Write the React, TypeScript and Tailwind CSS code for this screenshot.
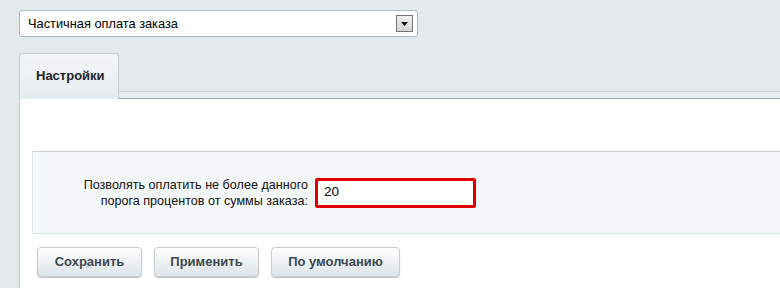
import React from 'react';

const buttons = [
  { label: 'Сохранить', w: 'w-[105px]' },
  { label: 'Применить', w: 'w-[105px]' },
  { label: 'По умолчанию', w: 'w-[129px]' },
];

const App: React.FC = () => {
  return (
    <div className="w-[780px] h-[288px] overflow-hidden bg-[#e4eaec] font-['Arial','Liberation_Sans',sans-serif] text-black">
      {/* select */}
      <div className="pt-[10px] pl-[19px]">
        <div className="w-[399px] h-[27px] bg-white border border-[#b2b9bc] rounded-[3px] flex items-center justify-between pl-[8px] pr-[4px]">
          <span className="text-[12.8px]">Частичная оплата заказа</span>
          <div className="w-[17px] h-[17px] border border-[#6f7477] bg-gradient-to-b from-[#f2f2f2] to-[#d4d4d4] flex items-center justify-center">
            <svg width="7" height="4" viewBox="0 0 7 4">
              <path d="M0 0h7L3.5 4z" fill="#111" />
            </svg>
          </div>
        </div>
      </div>

      {/* tabs */}
      <div className="mt-[16px] ml-[19px]">
        <div className="flex h-[39px]">
          <div className="w-[100px] h-[46px] -mb-[7px] relative z-10 border-l border-t border-r border-[#c6cdd0] rounded-tl-[3px] rounded-tr-[3px] bg-gradient-to-b from-[#f3f6f7] to-[#e6ecee] pl-[16px] pt-[12px] text-[13px] leading-[20px] font-bold text-[#1f2327]">
            Настройки
          </div>
          <div className="flex-1 border-b border-[#cbd2d5]" />
        </div>
        <div className="h-[7px] bg-[#e8eef0] border-b border-[#9da5a8]" />
      </div>

      {/* content */}
      <div className="ml-[19px] h-full bg-white border-l border-[#c3cacd] pt-[52px] pl-[12px]">
        <div className="h-[83px] bg-[#f5f8f9] border-t border-b border-l border-t-[#c8ced1] border-b-[#d7e0e3] border-l-[#dde4e6] flex items-center">
          <div className="w-[275px] text-right text-[12.6px] leading-[16px] text-[#111]">
            Позволять оплатить не более данного
            <br />
            порога процентов от суммы заказа:
          </div>
          <div className="ml-[7px] w-[161px] h-[30px] border-[3px] border-[#e00000] rounded-[2px] bg-white flex items-center pl-[6px]">
            <span className="text-[13.5px]">20</span>
          </div>
        </div>
        <div className="mt-[13px] ml-[5px] flex gap-[12px]">
          {buttons.map((b) => (
            <div
              key={b.label}
              className={`${b.w} h-[30px] rounded-[4px] border border-[#c7cdd0] bg-gradient-to-b from-[#ffffff] to-[#dde4e7] shadow-[0_1px_1px_rgba(0,0,0,0.25)] flex items-center justify-center text-[13px] font-bold text-[#3d4850]`}
            >
              {b.label}
            </div>
          ))}
        </div>
      </div>
    </div>
  );
};

export default App;
